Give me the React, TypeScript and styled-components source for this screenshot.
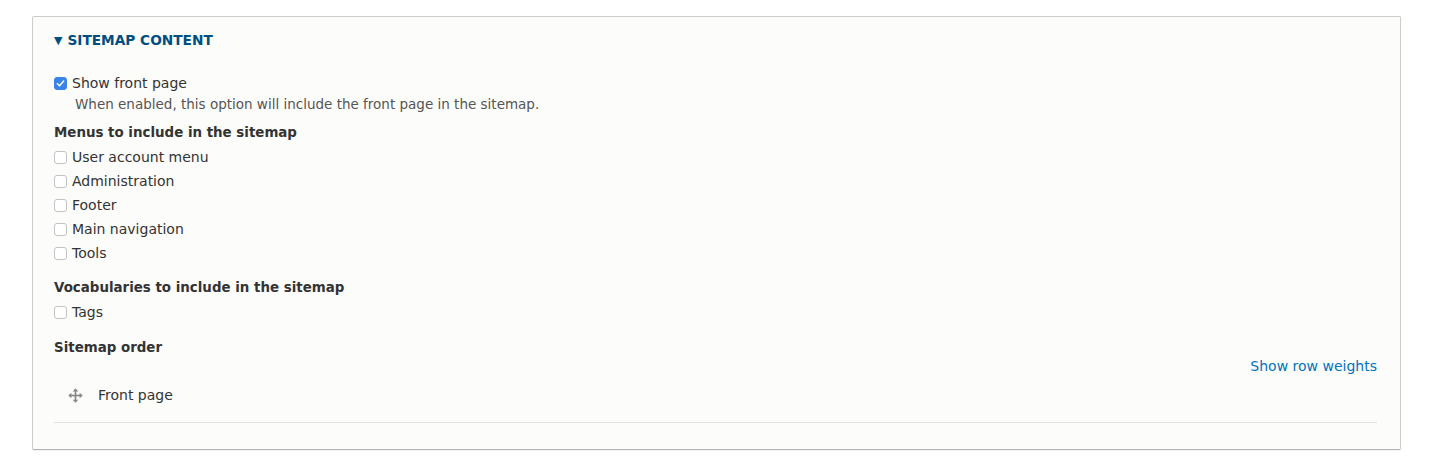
import React from "react";
import styled, { createGlobalStyle } from "styled-components";

const Global = createGlobalStyle`
  html, body { margin: 0; padding: 0; background: #fff; }
  body {
    font-family: "DejaVu Sans", "Noto Sans", sans-serif;
    font-size: 14px;
    line-height: 20px;
    color: #333;
  }
`;

const Page = styled.div`
  padding: 16px 34px 10px 32px;
`;

const Details = styled.div`
  background: #fcfcfa;
  border: 1px solid #ccc;
  border-bottom-color: #b3b3b3;
  border-radius: 2px;
  box-shadow: 0 1px 1px rgba(0, 0, 0, 0.06);
`;

const Summary = styled.div`
  display: flex;
  align-items: center;
  gap: 5px;
  padding: 12px 21px 0 21px;
  height: 22px;
  color: #004f80;
  font-weight: bold;
  font-size: 13.7px;
  text-transform: uppercase;
`;

const Caret = styled.span`
  font-size: 11px;
  line-height: 1;
`;

const Body = styled.div`
  padding: 21px 23px 26px 21px;
  display: flex;
  flex-direction: column;
`;

const Item = styled.label`
  display: flex;
  align-items: center;
  gap: 5px;
  height: 24px;
  box-sizing: border-box;
  padding-bottom: 2px;
  font-size: 14px;
`;

const Box = styled.span<{ $checked?: boolean }>`
  width: 13px;
  height: 13px;
  box-sizing: border-box;
  border-radius: 3px;
  border: 1px solid ${(p) => (p.$checked ? "#3a84e8" : "#c3c3c3")};
  background: ${(p) => (p.$checked ? "#3a84e8" : "#fff")};
  display: inline-flex;
  align-items: center;
  justify-content: center;
  flex: none;
`;

const Description = styled.div`
  padding-left: 21px;
  font-size: 13.5px;
  color: #555;
  line-height: 16px;
  margin-bottom: 9px;
`;

const Heading = styled.div`
  font-weight: bold;
  font-size: 13.4px;
  height: 24px;
  display: flex;
  align-items: center;
  margin-bottom: 1px;
`;

const Group = styled.div<{ $mb?: number }>`
  display: flex;
  flex-direction: column;
  margin-bottom: ${(p) => p.$mb ?? 0}px;
`;

const WeightsRow = styled.div`
  display: flex;
  justify-content: flex-end;
  height: 20px;
  margin-top: -5px;
`;

const Link = styled.a`
  color: #0074bd;
  text-decoration: none;
  font-size: 14px;
`;

const OrderRow = styled.div`
  display: flex;
  align-items: center;
  gap: 15px;
  height: 20px;
  padding: 9px 0 17px 14px;
  border-bottom: 1px solid #e2e2e0;
`;

const Checkbox = ({ checked }: { checked?: boolean }) => (
  <Box $checked={checked}>
    {checked && (
      <svg width="9" height="9" viewBox="0 0 8 8">
        <path d="M1.2 4.2 L3.2 6 L6.8 1.8" stroke="#fff" strokeWidth="1.3" fill="none" strokeLinecap="round" strokeLinejoin="round" />
      </svg>
    )}
  </Box>
);

const DragIcon = () => (
  <svg width="15" height="15" viewBox="0 0 16 16">
    <g fill="#888">
      <rect x="7.1" y="2.5" width="1.8" height="11" />
      <rect x="2.5" y="7.1" width="11" height="1.8" />
      <path d="M8 0.3 L11 3.6 L5 3.6 Z" />
      <path d="M8 15.7 L11 12.4 L5 12.4 Z" />
      <path d="M0.3 8 L3.6 5 L3.6 11 Z" />
      <path d="M15.7 8 L12.4 5 L12.4 11 Z" />
    </g>
  </svg>
);

const menus = ["User account menu", "Administration", "Footer", "Main navigation", "Tools"];

export default function App() {
  return (
    <>
      <Global />
      <Page>
        <Details>
          <Summary>
            <Caret>▼</Caret>
            <span>Sitemap content</span>
          </Summary>
          <Body>
            <Item>
              <Checkbox checked />
              Show front page
            </Item>
            <Description>When enabled, this option will include the front page in the sitemap.</Description>
            <Group $mb={10}>
              <Heading>Menus to include in the sitemap</Heading>
              {menus.map((m) => (
                <Item key={m}>
                  <Checkbox />
                  {m}
                </Item>
              ))}
            </Group>
            <Group $mb={11}>
              <Heading>Vocabularies to include in the sitemap</Heading>
              <Item>
                <Checkbox />
                Tags
              </Item>
            </Group>
            <Heading>Sitemap order</Heading>
            <WeightsRow>
              <Link href="#">Show row weights</Link>
            </WeightsRow>
            <OrderRow>
              <DragIcon />
              <span>Front page</span>
            </OrderRow>
          </Body>
        </Details>
      </Page>
    </>
  );
}
